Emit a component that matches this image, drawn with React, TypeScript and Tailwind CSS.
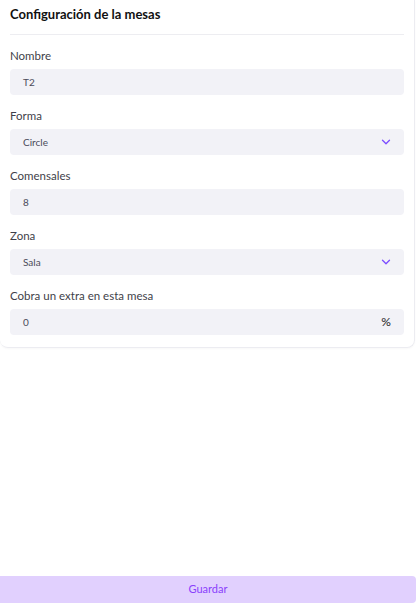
import { ChevronDown } from "lucide-react";

const fieldBox =
  "flex items-center justify-between h-[26px] rounded-[4px] bg-[#f2f2f7] pl-[13px] pr-[11px] text-[10px] text-[#4b4b5a]";

const Field = ({
  label,
  value,
  kind,
}: {
  label: string;
  value: string;
  kind?: "select" | "percent";
}) => (
  <div className="flex flex-col">
    <label className="h-[34px] pt-[13px] text-[11.5px] leading-[16px] text-[#3f3f4a]">
      {label}
    </label>
    <div className={fieldBox}>
      <span>{value}</span>
      {kind === "select" && (
        <ChevronDown className="w-[14px] h-[14px] text-[#7c4dff]" strokeWidth={2.2} />
      )}
      {kind === "percent" && (
        <span className="text-[12px] font-medium text-[#333] pr-[2px]">%</span>
      )}
    </div>
  </div>
);

export default function App() {
  return (
    <div
      className="flex flex-col h-[609px] w-[416px] bg-white"
      style={{ fontFamily: "Lato, 'Noto Sans', sans-serif" }}
    >
      <div className="w-[415px] border-r border-b border-[#ececf1] rounded-b-lg px-[10px] pb-[12px] shadow-[0_1px_2px_rgba(0,0,0,0.03)]">
        <div className="h-[35px] flex items-center border-b border-[#ededf1]">
          <h1 className="text-[13px] font-bold text-[#111] leading-none -mt-[6px]">
            Configuración de la mesas
          </h1>
        </div>
        <Field label="Nombre" value="T2" />
        <Field label="Forma" value="Circle" kind="select" />
        <Field label="Comensales" value="8" />
        <Field label="Zona" value="Sala" kind="select" />
        <Field label="Cobra un extra en esta mesa" value="0" kind="percent" />
      </div>
      <div className="flex-1" />
      <button className="mb-[6px] h-[27px] w-[416px] rounded-r-[4px] bg-[#e1d0fe] text-[11px] text-[#8a3ffc]">
        Guardar
      </button>
    </div>
  );
}
